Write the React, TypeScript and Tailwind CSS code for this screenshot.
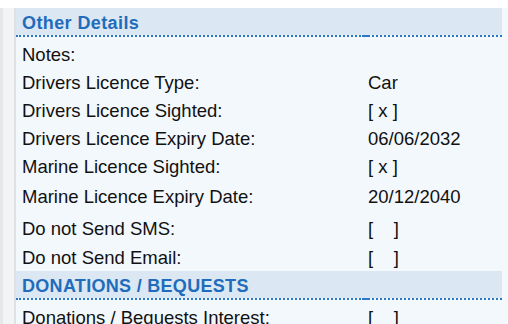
import React from 'react';

interface Row {
  label: string;
  value: string;
  h: string;
}

const details: Row[] = [
  { label: 'Notes:', value: '', h: 'h-[28px]' },
  { label: 'Drivers Licence Type:', value: 'Car', h: 'h-[28px]' },
  { label: 'Drivers Licence Sighted:', value: '[ x ]', h: 'h-[28px]' },
  { label: 'Drivers Licence Expiry Date:', value: '06/06/2032', h: 'h-[28px]' },
  { label: 'Marine Licence Sighted:', value: '[ x ]', h: 'h-[28px]' },
  { label: 'Marine Licence Expiry Date:', value: '20/12/2040', h: 'h-[32px]' },
  { label: 'Do not Send SMS:', value: '[    ]', h: 'h-[32px]' },
  { label: 'Do not Send Email:', value: '[    ]', h: 'h-[26px]' },
];

function SectionHeader({ title, track }: { title: string; track: string }) {
  return (
    <div className="w-[486px] shrink-0">
      <div className={`h-[27px] bg-[#dbe7f2] pl-[6px] pt-[4px] flex items-center text-[18px] text-[#1f6cbd] font-bold ${track}`}>
        {title}
      </div>
      <div className="flex">
        <div className="w-[348px] border-b-2 border-dotted border-[#2a78c8]" />
        <div className="w-[4px] h-[2px] bg-[#2a78c8]" />
        <div className="flex-1 border-b-2 border-dotted border-[#2a78c8]" />
      </div>
    </div>
  );
}

function DetailRow({ row }: { row: Row }) {
  return (
    <div className={`${row.h} shrink-0 flex items-center text-[18.5px] text-[#111]`}>
      <div className="w-[352px] pl-[6px] whitespace-nowrap">{row.label}</div>
      <div className="whitespace-pre">{row.value}</div>
    </div>
  );
}

export default function App() {
  return (
    <div
      className="w-[508px] h-[324px] bg-white overflow-hidden flex flex-col"
      style={{ fontFamily: '"Liberation Sans", Arial, sans-serif' }}
    >
      <div className="h-[8px] shrink-0" />
      <div className="flex flex-1 min-h-0">
        <div className="w-[3px] bg-[#e6e7e8]" />
        <div className="w-[11px] bg-[#f2f4f6]" />
        <div className="w-[2px] bg-[#dde2e7]" />
        <div className="flex-1 bg-[#f3f8fd] flex flex-col">
          <SectionHeader title="Other Details" track="tracking-[0.4px]" />
          <div className="h-[4px] shrink-0" />
          {details.map((r) => (
            <DetailRow key={r.label} row={r} />
          ))}
          <SectionHeader title="DONATIONS / BEQUESTS" track="tracking-[0.3px]" />
          <DetailRow row={{ label: 'Donations / Bequests Interest:', value: '[    ]', h: 'h-[35px]' }} />
        </div>
      </div>
    </div>
  );
}
